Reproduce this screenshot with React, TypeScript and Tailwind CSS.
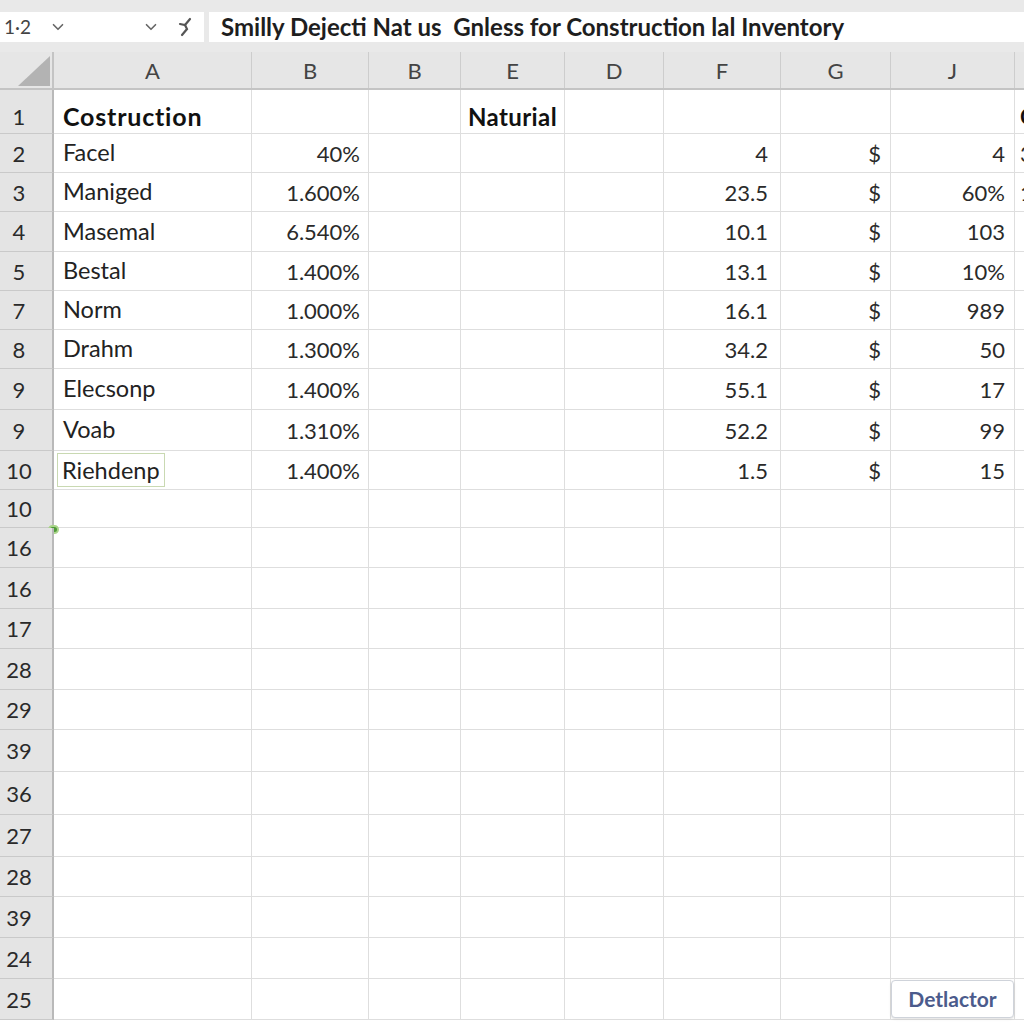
import { ChevronDown } from 'lucide-react';

// column widths taken from the screenshot (row header first)
const cols = [
  { key: 'a', label: 'A', w: 'w-[198px]' },
  { key: 'b', label: 'B', w: 'w-[117px]' },
  { key: 'c', label: 'B', w: 'w-[92px]' },
  { key: 'e', label: 'E', w: 'w-[104px]' },
  { key: 'd', label: 'D', w: 'w-[99px]' },
  { key: 'f', label: 'F', w: 'w-[117px]' },
  { key: 'g', label: 'G', w: 'w-[110px]' },
  { key: 'j', label: 'J', w: 'w-[124px]' },
];

type Row = {
  n: string;
  h: string;
  a?: string;
  b?: string;
  e?: string;
  f?: string;
  g?: string;
  j?: string;
  x?: string;
  bold?: boolean;
  selected?: boolean;
};

const rows: Row[] = [
  { n: '1', h: 'h-[44px]', a: 'Costruction', e: 'Naturial', x: 'Cost', bold: true },
  { n: '2', h: 'h-[39px]', a: 'Facel', b: '40%', f: '4', g: '$', j: '4', x: '3' },
  { n: '3', h: 'h-[39px]', a: 'Maniged', b: '1.600%', f: '23.5', g: '$', j: '60%', x: '1' },
  { n: '4', h: 'h-[40px]', a: 'Masemal', b: '6.540%', f: '10.1', g: '$', j: '103' },
  { n: '5', h: 'h-[39px]', a: 'Bestal', b: '1.400%', f: '13.1', g: '$', j: '10%' },
  { n: '7', h: 'h-[39px]', a: 'Norm', b: '1.000%', f: '16.1', g: '$', j: '989' },
  { n: '8', h: 'h-[39px]', a: 'Drahm', b: '1.300%', f: '34.2', g: '$', j: '50' },
  { n: '9', h: 'h-[41px]', a: 'Elecsonp', b: '1.400%', f: '55.1', g: '$', j: '17' },
  { n: '9', h: 'h-[41px]', a: 'Voab', b: '1.310%', f: '52.2', g: '$', j: '99' },
  { n: '10', h: 'h-[39px]', a: 'Riehdenp', b: '1.400%', f: '1.5', g: '$', j: '15', selected: true },
  { n: '10', h: 'h-[38px]' },
  { n: '16', h: 'h-[40px]' },
  { n: '16', h: 'h-[41px]' },
  { n: '17', h: 'h-[40px]' },
  { n: '28', h: 'h-[41px]' },
  { n: '29', h: 'h-[40px]' },
  { n: '39', h: 'h-[42px]' },
  { n: '36', h: 'h-[43px]' },
  { n: '27', h: 'h-[42px]' },
  { n: '28', h: 'h-[40px]' },
  { n: '39', h: 'h-[41px]' },
  { n: '24', h: 'h-[41px]' },
  { n: '25', h: 'h-[41px]' },
];

const cell = 'shrink-0 h-full border-r border-b border-[#dedede] flex items-center overflow-visible whitespace-nowrap';

const GridRow = ({ row, last }: { row: Row; last: boolean }) => (
  <div className={`flex ${row.h} ${row.bold ? 'pt-0' : ''}`}>
    <div className={`relative shrink-0 w-[54px] h-full bg-[#e4e4e4] border-r-2 border-b border-r-[#b9b9b9] border-b-[#c9c9c9] flex items-center justify-center pr-[14px] text-[22px] text-[#2a2a2a] ${row.bold ? 'pt-[10px]' : ''}`}>
      {row.n}
      {row.n === '10' && !row.a && (
        <span className="absolute right-[-7px] bottom-[-7px] w-[11px] h-[9px] rounded-full bg-[#4f9a3a] border-2 border-[#a9d48a]" />
      )}
    </div>
    <div className={`${cell} ${cols[0].w} pl-[9px] ${row.bold ? 'pt-[10px] font-bold text-[25px] tracking-[0.8px] text-[#111]' : 'text-[23.5px] text-[#222]'}`}>
      {row.selected ? (
        <span className="border border-[#c9d9b2] px-[4px] -ml-[6px] leading-[32px]">{row.a}</span>
      ) : (
        row.a
      )}
    </div>
    <div className={`${cell} ${cols[1].w} justify-end pr-[8px]`}>{row.b}</div>
    <div className={`${cell} ${cols[2].w}`} />
    <div className={`${cell} ${cols[3].w} pl-[7px] ${row.bold ? 'pt-[10px] font-bold text-[24px] tracking-[0.4px] text-[#111]' : ''}`}>{row.e}</div>
    <div className={`${cell} ${cols[4].w}`} />
    <div className={`${cell} ${cols[5].w} justify-end pr-[12px]`}>{row.f}</div>
    <div className={`${cell} ${cols[6].w} justify-end pr-[9px]`}>{row.g}</div>
    <div className={`${cell} ${cols[7].w} justify-end pr-[9px]`}>
      {last ? (
        <span className="h-[38px] w-[124px] -mr-[9px] rounded-[4px] border border-[#cfd3da] bg-white flex items-center justify-center text-[21px] font-bold text-[#4b5b8c] shadow-sm">
          Detlactor
        </span>
      ) : (
        row.j
      )}
    </div>
    <div className={`flex-1 h-full border-b border-[#dedede] flex items-center pl-[5px] overflow-hidden whitespace-nowrap ${row.bold ? 'pt-[10px] font-bold text-[#111]' : ''}`}>
      {row.x}
    </div>
  </div>
);

export default function App() {
  return (
    <div className="w-[1024px] h-[1024px] overflow-hidden bg-white font-['Lato',sans-serif] text-[22px] text-[#2a2a2a]">
      {/* name box + formula bar */}
      <div className="h-[52px] bg-[#e9e9e9] pt-[12px] pb-[10px] flex gap-[5px]">
        <div className="w-[204px] bg-white flex items-center pl-[4px] text-[19px] text-[#444]">
          <span>1·2</span>
          <ChevronDown className="ml-[18px] text-[#666]" size={18} strokeWidth={2.2} />
          <ChevronDown className="ml-[75px] text-[#666]" size={18} strokeWidth={2.2} />
          <svg className="ml-[16px]" width="18" height="22" viewBox="0 0 18 22" fill="none" stroke="#555" strokeWidth="2.2" strokeLinecap="round">
            <path d="M14 3 L9 9 L4 8" />
            <path d="M9 9 L11 13 L6 19" />
          </svg>
        </div>
        <div className="flex-1 bg-white flex items-center pl-[12px] text-[24px] font-bold text-[#1e1e1e] whitespace-nowrap">
          Smilly Dejecti Nat us&nbsp; Gnless for Construction lal Inventory
        </div>
      </div>

      {/* column headers */}
      <div className="flex h-[38px] bg-[#e6e6e6] border-b-2 border-[#c4c4c4]">
        <div className="shrink-0 w-[54px] h-full border-r-2 border-[#c4c4c4] flex items-end justify-end pb-[2px] pr-[2px]">
          <svg width="32" height="30" viewBox="0 0 32 30">
            <polygon points="32,0 32,30 0,30" fill="#b3b3b3" />
          </svg>
        </div>
        {cols.map((c, i) => (
          <div key={i} className={`shrink-0 ${c.w} h-full border-r border-[#cdcdcd] flex items-center justify-center text-[22px] text-[#444]`}>
            {c.label}
          </div>
        ))}
        <div className="flex-1" />
      </div>

      {/* grid body */}
      {rows.map((r, i) => (
        <GridRow key={i} row={r} last={i === rows.length - 1} />
      ))}
    </div>
  );
}
